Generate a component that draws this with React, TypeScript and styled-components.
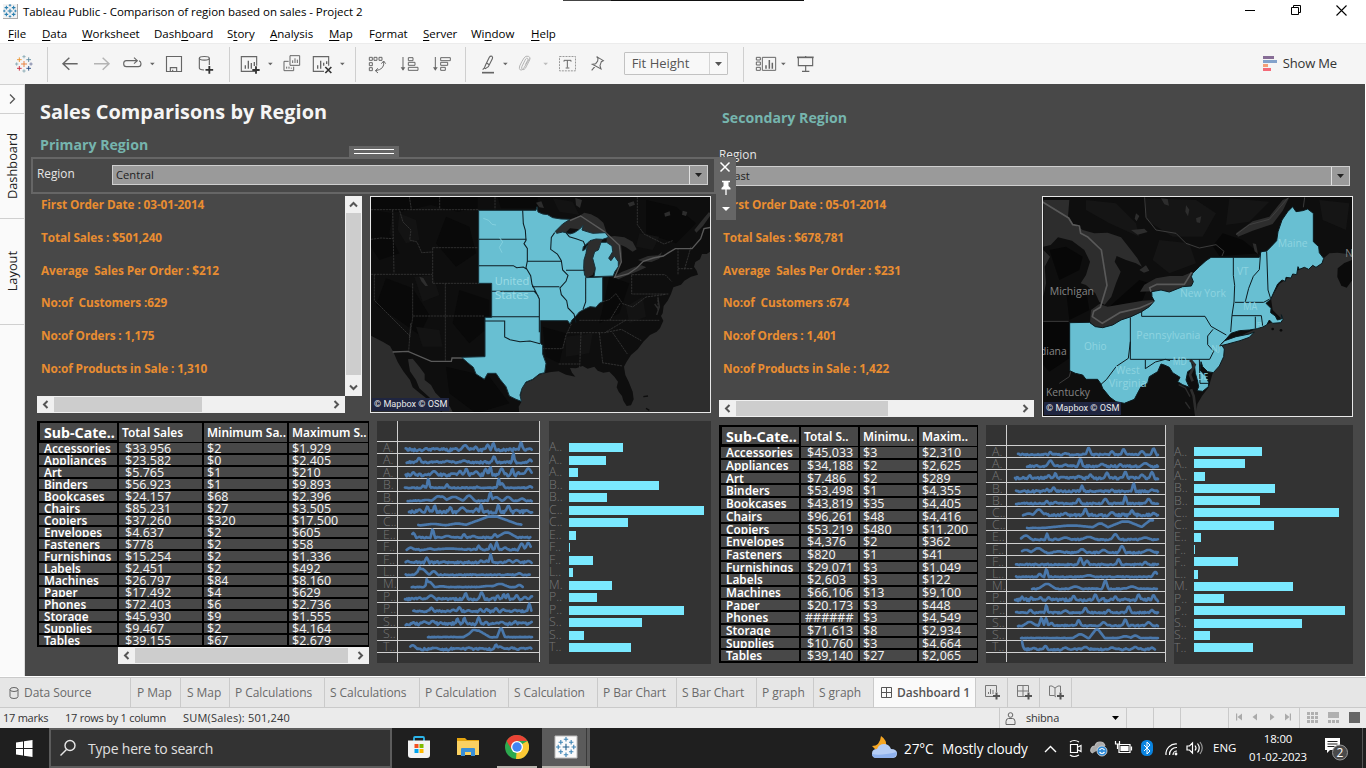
import React from "react";
import styled, { createGlobalStyle } from "styled-components";

const ui = `"Open Sans", "Noto Sans", sans-serif`;
const noto = `"Noto Sans", "Open Sans", sans-serif`;

const Global = createGlobalStyle`
  * { box-sizing: border-box; }
  html, body { margin: 0; padding: 0; overflow: hidden; }
  body { font-family: ${ui}; background: #fff; }
  svg { display: block; flex: none; }
`;

const Screen = styled.div`
  width: 1366px; height: 768px; display: flex; flex-direction: column; background: #fff;
`;

/* ---------- window chrome ---------- */
const TitleBar = styled.header`
  height: 24px; display: flex; align-items: flex-start; padding-left: 3px;
`;
const AppIcon = styled.div`
  width: 15px; height: 15px; margin-top: 4px; border-right: 1px solid #aaa; border-bottom: 1px solid #aaa; background: #f2f2f2;
`;
const WindowTitle = styled.div`
  margin-left: 5px; line-height: 24px; font-size: 11.5px; letter-spacing: -0.05px; color: #000; width: 540px; white-space: nowrap;
`;
const Notch = styled.div`
  width: 241px; height: 1px; background: linear-gradient(90deg, #444 48px, #111 48px);
`;
const WinButtons = styled.div`
  margin-left: auto; display: flex; padding-right: 19px; padding-top: 5px; gap: 34.5px;
`;
const MenuBar = styled.nav`
  height: 19px; display: flex; padding-left: 8px;
`;
const MenuItem = styled.div<{ $w: number }>`
  width: ${(p) => p.$w}px; font-size: 11.5px; line-height: 20px; letter-spacing: -0.02px; color: #000; white-space: nowrap;
  u { text-underline-offset: 2px; }
`;

/* ---------- toolbar ---------- */
const Toolbar = styled.div`
  height: 41px; display: flex; background: #f5f5f5; border-top: 1px solid #ececec;
`;
const Sep = styled.div`
  width: 1px; height: 35px; margin-top: 3px; background: #cfcfcf;
`;
const FitSelect = styled.div`
  margin: 8px 0 0 8px; width: 104px; height: 23px; border: 1px solid #c2c2c2; border-radius: 1px; display: flex; background: #f8f8f8;
`;
const FitText = styled.div`
  width: 85px; padding-left: 7px; line-height: 20px; font-size: 13px; color: #555; border-right: 1px solid #d4d4d4;
`;
const FitArrow = styled.div`
  flex: 1; display: grid; place-items: center;
`;
const ShowMe = styled.div`
  margin-left: auto; margin-right: 29px; display: flex; align-items: center; gap: 6px; font-size: 13px; letter-spacing: -0.15px; color: #333; white-space: nowrap; height: 38px;
`;

/* ---------- body ---------- */
const Body = styled.main`
  height: 592px; display: flex;
`;
const Side = styled.aside`
  width: 25px; background: #fafafa; border-right: 1px solid #dcdcdc; border-top: 1px solid #d0d0d0; display: flex; flex-direction: column;
`;
const SideCell = styled.div<{ $h: number }>`
  height: ${(p) => p.$h}px; border-bottom: 1px solid #d0d0d0; display: flex; align-items: center; justify-content: center;
`;
const Vertical = styled.span`
  writing-mode: vertical-rl; transform: rotate(180deg); font-size: 12.8px; color: #222; line-height: 20px;
`;
const Dash = styled.section`
  width: 1340px; background: #484848; display: flex;
`;
const Primary = styled.div`
  width: 692px; padding-left: 12px; display: flex; flex-direction: column;
`;
const Secondary = styled.div`
  flex: 1; padding-left: 2px; display: flex; flex-direction: column;
`;
const Title = styled.h1`
  margin: 14px 0 0 3px; font: 700 19.9px/28px ${ui}; color: #f5f5f5; white-space: nowrap;
`;
const Sub = styled.h2<{ $top: number; $bottom: number }>`
  margin: ${(p) => p.$top}px 0 ${(p) => p.$bottom}px 3px; font: 700 14.15px/22px ${ui}; color: #76b5ae; white-space: nowrap;
`;
const FilterBox = styled.div`
  position: relative; margin-left: -6px; width: 685px; height: 37px; border: 2px solid #666; display: flex; padding: 6px 0 0 4px;
`;
const Handle = styled.div`
  position: absolute; left: 316px; top: -13px; width: 50px; height: 11px; background: #666; padding: 3px 5px 0;
  display: flex; flex-direction: column; gap: 3px;
  i { height: 1px; background: #fff; }
`;
const Floater = styled.div`
  position: absolute; z-index: 2; left: 683px; top: -2px; width: 20px; height: 63px; background: #666;
`;
const FieldLabel = styled.div<{ $w?: number; $lh?: number }>`
  width: ${(p) => (p.$w ? p.$w + "px" : "auto")}; height: 19px; font-size: 11.8px; line-height: ${(p) => p.$lh ?? 19}px; color: #e6e6e6;
`;
const Select = styled.div<{ $w: number }>`
  width: ${(p) => p.$w}px; height: 20px; border: 1px solid #cfcfcf; background: #9a9a9a; display: flex;
`;
const SelectValue = styled.div<{ $pad: number }>`
  flex: 1; padding-left: ${(p) => p.$pad}px; font-size: 11.2px; line-height: 18px; color: #222;
`;
const SelectArrow = styled.div`
  width: 18px; border-left: 1px solid #e0e0e0; display: grid; place-items: center;
`;
const Row = styled.div<{ $top: number }>`
  display: flex; margin-top: ${(p) => p.$top}px; align-items: flex-start;
`;
const Gap = styled.div<{ $w: number }>`
  width: ${(p) => p.$w}px; flex: none;
`;
const KpiPanel = styled.div<{ $w: number; $h: number; $bar: number }>`
  display: grid; grid-template-columns: ${(p) => p.$w}px ${(p) => p.$bar}px; grid-template-rows: ${(p) => p.$h}px 17px;
`;
const KpiList = styled.div`
  padding-left: 4px; overflow: hidden;
`;
const Kpi = styled.div`
  height: 32.8px; font: 700 11.8px/16px ${ui}; letter-spacing: -0.1px; color: #e98d31; white-space: pre;
`;
const HBar = styled.div<{ $w: number }>`
  width: ${(p) => p.$w}px; height: 17px; background: #f0f0f0; display: flex; align-items: center; justify-content: space-between;
`;
const HThumb = styled.div<{ $w: number }>`
  width: ${(p) => p.$w}px; height: 15px; background: #cdcdcd; margin-right: auto;
`;
const VBar = styled.div`
  width: 17px; background: #f0f0f0; display: flex; flex-direction: column; align-items: center; justify-content: space-between;
`;
const VThumb = styled.div`
  width: 15px; height: 162px; background: #cdcdcd; margin-bottom: auto;
`;
const MapFrame = styled.div<{ $w: number; $h: number }>`
  position: relative; width: ${(p) => p.$w}px; height: ${(p) => p.$h}px; border: 1px solid #e8e8e8; overflow: hidden;
  > svg { margin: -1px; }
`;
const Attribution = styled.div`
  position: absolute; left: 1px; bottom: 1px; height: 13px; padding: 0 2px; background: #1f2540; color: #e8e8e8;
  font: 9.1px/13px Roboto, sans-serif; white-space: nowrap;
`;

/* ---------- tables ---------- */
const TableBox = styled.div<{ $w: number }>`
  width: ${(p) => p.$w}px; background: #000;
`;
const THead = styled.div<{ $cols: string; $h: number }>`
  display: grid; grid-template-columns: ${(p) => p.$cols}; column-gap: 2px; padding: 2px 1px 0 2px; height: ${(p) => p.$h}px;
`;
const TH = styled.div<{ $first?: boolean }>`
  background: #484848; overflow: hidden; white-space: nowrap; color: #fff;
  margin: ${(p) => (p.$first ? "0 0 3px 1px" : "0 0 1px")};
  padding-left: ${(p) => (p.$first ? 4 : 3)}px;
  font: ${(p) => (p.$first ? "700 14.2px" : "600 11.9px")}/19px ${noto};
  letter-spacing: 0;
`;
const TRow = styled.div<{ $cols: string; $h: number }>`
  display: grid; grid-template-columns: ${(p) => p.$cols}; column-gap: 2px; padding: 0 1px 2px 2px; height: ${(p) => p.$h}px;
`;
const TD = styled.div<{ $pad: number; $bold?: boolean }>`
  background: #484848; overflow: hidden; white-space: nowrap; padding-left: ${(p) => p.$pad}px; color: ${(p) => (p.$bold ? "#fff" : "#f0f0f0")};
  font: ${(p) => (p.$bold ? "600 11.8px" : "400 12.5px")}/11px ${noto};
`;

/* ---------- charts ---------- */
const Panel = styled.div<{ $w: number; $h: number }>`
  width: ${(p) => p.$w}px; height: ${(p) => p.$h}px; background: #333; display: flex; flex-direction: column; position: relative;
`;
const Rules = styled.div<{ $h: number }>`
  position: absolute; left: 20px; right: 0; top: 0; height: ${(p) => p.$h}px; border-left: 1px solid #cfcfcf; border-right: 1px solid #cfcfcf;
`;
const Lead = styled.div<{ $h: number }>`
  height: ${(p) => p.$h}px; flex: none;
`;
const SparkRow = styled.div<{ $h: number }>`
  height: ${(p) => p.$h}px; flex: none; border-top: 1px solid #cfcfcf; display: flex;
`;
const SparkEnd = styled.div`
  height: 1px; background: #cfcfcf;
`;
const Letter = styled.span<{ $w: number; $pad: number; $h: number }>`
  width: ${(p) => p.$w}px; flex: none; padding-left: ${(p) => p.$pad}px; overflow: visible; white-space: nowrap;
  font: 300 12.3px/${(p) => p.$h}px ${ui}; color: #777;
`;
const BarRow = styled.div<{ $h: number }>`
  height: ${(p) => p.$h}px; flex: none; display: flex; align-items: center;
`;
const Bar = styled.div`
  height: 9px; background: #7ae9ff;
`;

/* ---------- tabs + status ---------- */
const Tabs = styled.div`
  height: 32px; border-top: 1px solid #fff; display: flex; background: #e6e6e6; box-shadow: inset 0 1px 0 #cacaca, inset 0 -1px 0 #cacaca; padding: 1px 0;
`;
const Tab = styled.div<{ $w: number; $pad?: number; $active?: boolean }>`
  width: ${(p) => p.$w}px; padding-left: ${(p) => p.$pad ?? 5}px; border-right: 1px solid #cacaca; display: flex; align-items: center; gap: 5px; white-space: nowrap;
  font: ${(p) => (p.$active ? "600 12px" : "400 12px")}/28px ${ui}; letter-spacing: -0.06px;
  color: ${(p) => (p.$active ? "#555" : "#6a6a6a")}; background: ${(p) => (p.$active ? "#fafafa" : "transparent")};
`;
const Status = styled.div`
  height: 20px; background: #ebebeb; display: flex; font: 11px/20px ${ui}; color: #333; white-space: nowrap; letter-spacing: -0.22px;
`;
const StatusText = styled.div<{ $w: number; $ls?: number }>`
  width: ${(p) => p.$w}px; padding-left: 3px; letter-spacing: ${(p) => p.$ls ?? -0.25}px;
`;
const StatusCell = styled.div<{ $w: number }>`
  width: ${(p) => p.$w}px; border-left: 1px solid #cacaca; display: flex; align-items: center;
`;

/* ---------- taskbar ---------- */
const Taskbar = styled.footer`
  height: 40px; background: #1f1f1f; display: flex; color: #fff;
`;
const Start = styled.div`
  width: 49px; display: flex; align-items: center; padding-left: 16px;
`;
const Search = styled.div`
  width: 343px; border: 2px solid #5c5c5c; background: #333; display: flex; align-items: center; padding-left: 8px; gap: 11px;
  font-size: 14px; color: #e0e0e0; letter-spacing: -0.2px;
`;
const TaskApp = styled.div<{ $w: number; $on?: boolean; $line?: boolean }>`
  width: ${(p) => p.$w}px; display: flex; align-items: center; justify-content: center;
  background: ${(p) => (p.$on ? "linear-gradient(90deg,#5b5b5b 44px,#3a3a3a 44px,#3a3a3a 45px,#5b5b5b 45px)" : "transparent")};
  border-bottom: 2px solid ${(p) => (p.$line ? "#b8b5ae" : "transparent")};
`;
const Weather = styled.div`
  margin-left: auto; width: 173px; display: flex; align-items: center; font-size: 13.6px; white-space: nowrap; letter-spacing: -0.1px;
`;
const TempText = styled.span`
  width: 38px; margin-left: 7px;
`;
const Tray = styled.div`
  width: 169px; display: flex; align-items: center;
`;
const Lang = styled.div`
  width: 34px; line-height: 39px; font-size: 11.5px;
`;
const Clock = styled.div`
  width: 62px; text-align: center; font-size: 11.4px; line-height: 18px; padding-top: 2px; letter-spacing: -0.15px; white-space: nowrap;
`;
const Notice = styled.div`
  width: 54px; padding-left: 15px; border-right: 1px solid #555; margin-right: 3px; display: flex; align-items: center;
`;

/* ---------- icons ---------- */
type IcoProps = { x: number; w: number; children?: React.ReactNode; y?: number; h?: number };
const Tool = ({ x, w, y = 132, h = 120, children }: IcoProps) => (
  <svg width={w / 3} height={h / 3} viewBox={`${x} ${y} ${w} ${h}`} fill="none" stroke="#666" strokeWidth="3.4">
    {children}
  </svg>
);
const caret = (x: number, y: number, c = "#666") => <path d={`M${x - 7} ${y - 4}h14l-7 8z`} fill={c} stroke="none" />;
const plus = (x: number, y: number, r: number, c: string, w = 3) => (
  <path key={`${x},${y}`} d={`M${x - r} ${y}h${2 * r}M${x} ${y - r}v${2 * r}`} stroke={c} strokeWidth={w} fill="none" />
);
const Cluster = ({ size, mono, w = 3 }: { size: number; mono?: string; w?: number }) => (
  <svg width={size} height={size} viewBox="44 164 54 54">
    {plus(71, 191, 9, mono ?? "#e8762d", w)}
    {plus(57, 178, 7, mono ?? "#eb9129", w)}
    {plus(85, 178, 7, mono ?? "#59879b", w)}
    {plus(57, 204, 7, mono ?? "#c72035", w)}
    {plus(85, 204, 7, mono ?? "#1f457e", w)}
    {plus(71, 169, 5, mono ?? "#7199a6", w * 0.8)}
    {plus(71, 212, 5, mono ?? "#7199a6", w * 0.8)}
    {plus(49, 191, 5, mono ?? "#7099a6", w * 0.8)}
    {plus(92, 191, 5, mono ?? "#5b6591", w * 0.8)}
  </svg>
);
const LogoCell = styled.div`
  width: 47px; display: flex; align-items: center; padding-left: 15px; height: 39px;
`;

const ArrowDown = ({ c = "#222" }: { c?: string }) => (
  <svg width="7" height="4" viewBox="0 0 7 4"><path d="M0 0h7L3.5 4z" fill={c} /></svg>
);
const Chev = ({ dir }: { dir: "l" | "r" | "u" | "d" }) => {
  const rot = { l: 0, u: 90, r: 180, d: 270 }[dir];
  return (
    <svg width="17" height="17" viewBox="0 0 17 17">
      <path d="M10.5 5L7 8.5l3.5 3.5" fill="none" stroke="#555" strokeWidth="2" transform={`rotate(${rot} 8.5 8.5)`} />
    </svg>
  );
};

/* ---------- data ---------- */
const names = ["Accessories", "Appliances", "Art", "Binders", "Bookcases", "Chairs", "Copiers", "Envelopes", "Fasteners", "Furnishings", "Labels", "Machines", "Paper", "Phones", "Storage", "Supplies", "Tables"];
const central = ["$33,956|$2|$1,929", "$23,582|$0|$2,405", "$5,765|$1|$210", "$56,923|$1|$9,893", "$24,157|$68|$2,396", "$85,231|$27|$3,505", "$37,260|$320|$17,500", "$4,637|$2|$605", "$778|$2|$58", "$15,254|$2|$1,336", "$2,451|$2|$492", "$26,797|$84|$8,160", "$17,492|$4|$629", "$72,403|$6|$2,736", "$45,930|$9|$1,555", "$9,467|$2|$4,164", "$39,155|$67|$2,679"];
const east = ["$45,033|$3|$2,310", "$34,188|$2|$2,625", "$7,486|$2|$289", "$53,498|$1|$4,355", "$43,819|$35|$4,405", "$96,261|$48|$4,416", "$53,219|$480|$11,200", "$4,376|$2|$362", "$820|$1|$41", "$29,071|$3|$1,049", "$2,603|$3|$122", "$66,106|$13|$9,100", "$20,173|$3|$448", "######|$3|$4,549", "$71,613|$8|$2,934", "$10,760|$3|$4,664", "$39,140|$27|$2,065"];
const barsL = [54, 37, 9, 90, 38, 135, 59, 7, 1, 24, 4, 43, 28, 115, 73, 15, 62];
const barsR = [68, 51, 11, 81, 66, 145, 80, 7, 1, 44, 4, 99, 30, 151, 108, 16, 59];

/* each line: [start, end, noise, [peakX, height, halfWidth]...] */
type Line = [number, number, number, ...[number, number, number][]];
const linesL: Line[] = [
  [107, 485, 6, [168, 9, 10], [200, 8, 14], [255, 8, 12], [285, 18, 14], [317, 14, 8], [353, 20, 8], [370, 24, 7], [453, 26, 7], [480, 8, 8]],
  [110, 486, 4, [147, 16, 8], [232, 7, 14], [282, 8, 14], [372, 20, 8], [430, 29, 5], [480, 11, 8]],
  [107, 486, 6, [130, 12, 8], [192, 15, 14], [270, 16, 8], [289, 22, 8], [318, 14, 12], [347, 22, 8], [361, 27, 6], [395, 23, 10], [427, 22, 6], [445, 12, 7], [475, 23, 14]],
  [105, 486, 2, [160, 8, 6], [175, 28, 5], [231, 12, 6], [321, 5, 5], [386, 28, 5], [396, 15, 8], [480, 6, 8]],
  [113, 486, 2, [170, 4, 20], [205, 15, 18], [216, 14, 16], [252, 13, 26], [297, 17, 16], [361, 26, 6], [378, 12, 16], [414, 13, 14], [456, 8, 12]],
  [117, 486, 6, [148, 11, 10], [172, 20, 7], [194, 23, 6], [241, 18, 7], [277, 17, 16], [319, 14, 8], [333, 26, 6], [385, 25, 6], [415, 22, 9], [440, 10, 8], [470, 9, 10]],
  [145, 456, 1, [190, 4, 30], [262, 5, 30], [330, 12, 40], [368, 26, 70], [435, 4, 30]],
  [127, 483, 3, [130, 16, 8], [188, 26, 6], [232, 7, 18], [282, 12, 7], [310, 7, 12], [375, 12, 8], [410, 17, 30]],
  [110, 483, 3, [122, 8, 12], [180, 5, 16], [240, 5, 60], [326, 14, 6], [362, 18, 6], [380, 24, 6], [405, 8, 10], [455, 20, 10], [475, 22, 10]],
  [107, 486, 4, [113, 7, 8], [170, 17, 7], [220, 5, 8], [333, 8, 8], [350, 8, 6], [362, 28, 5], [417, 9, 12], [440, 9, 12], [475, 7, 10]],
  [107, 480, 2, [148, 24, 5], [155, 19, 20], [191, 12, 12], [448, 6, 10]],
  [125, 460, 1, [171, 26, 4], [178, 16, 14], [215, 3, 20], [355, 4, 30], [390, 10, 26], [448, 7, 10]],
  [105, 486, 5, [148, 8, 10], [183, 14, 16], [287, 21, 7], [335, 23, 9], [383, 14, 7], [401, 18, 6], [413, 18, 6], [440, 15, 8], [465, 10, 10], [485, 12, 8]],
  [130, 486, 4, [184, 14, 8], [250, 8, 10], [268, 15, 8], [295, 6, 10], [331, 10, 7], [350, 10, 7], [378, 12, 8], [400, 9, 8], [435, 7, 10], [478, 26, 6]],
  [107, 486, 6, [130, 9, 8], [163, 11, 14], [188, 13, 12], [212, 9, 8], [262, 20, 6], [283, 22, 6], [326, 24, 7], [348, 10, 8], [395, 10, 14], [436, 12, 8], [460, 8, 12], [484, 10, 6]],
  [174, 486, 1, [313, 22, 22], [320, 20, 34], [393, 27, 10]],
  [121, 486, 5, [128, 15, 15], [195, 7, 20], [262, 6, 20], [297, 8, 10], [335, 6, 14], [378, 17, 7], [390, 11, 14], [425, 8, 10], [460, 7, 10], [480, 8, 8]],
];
const linesR: Line[] = [
  [918, 1338, 3, [1015, 10, 6], [1060, 6, 10], [1130, 22, 8], [1200, 12, 8], [1235, 18, 8], [1290, 12, 10], [1325, 20, 8]],
  [945, 1338, 4, [1015, 20, 12], [1060, 8, 12], [1105, 24, 8], [1170, 10, 12], [1225, 9, 8], [1300, 12, 16]],
  [909, 1338, 5, [953, 12, 7], [1010, 12, 8], [1030, 18, 6], [1100, 10, 8], [1135, 14, 8], [1185, 20, 8], [1240, 22, 8], [1290, 14, 10], [1320, 22, 8]],
  [912, 1338, 4, [1005, 10, 6], [1025, 14, 8], [1110, 20, 6], [1200, 8, 8], [1265, 26, 6], [1320, 8, 10]],
  [912, 1338, 3, [1004, 10, 6], [1030, 7, 8], [1100, 16, 8], [1180, 16, 10], [1240, 24, 6], [1310, 16, 10]],
  [933, 1338, 5, [950, 8, 20], [980, 20, 18], [1000, 8, 10], [1060, 10, 10], [1120, 22, 8], [1200, 12, 12], [1260, 18, 8], [1325, 10, 8]],
  [945, 1325, 1, [1080, 8, 80], [1165, 14, 24], [1240, 20, 50], [1320, 24, 30]],
  [927, 1338, 3, [941, 14, 18], [1005, 20, 5], [1060, 8, 20], [1130, 10, 24], [1210, 18, 12], [1300, 8, 20]],
  [930, 1338, 3, [941, 10, 20], [978, 15, 22], [1040, 6, 20], [1110, 12, 14], [1175, 10, 14], [1230, 22, 10], [1310, 10, 20]],
  [912, 1338, 3, [1105, 22, 8], [1125, 14, 8], [1220, 18, 8], [1300, 10, 8]],
  [912, 1335, 2, [983, 10, 8], [1003, 24, 6], [1130, 6, 20], [1330, 16, 10]],
  [960, 1335, 2, [1005, 16, 24], [1090, 8, 20], [1180, 26, 8], [1260, 8, 20]],
  [909, 1338, 6, [930, 14, 6], [958, 12, 6], [985, 12, 8], [1010, 12, 8], [1085, 16, 8], [1150, 20, 8], [1210, 14, 8], [1280, 20, 8], [1325, 18, 8]],
  [912, 1338, 3, [955, 10, 8], [1003, 24, 5], [1060, 8, 12], [1120, 16, 8], [1190, 10, 8], [1250, 20, 8], [1320, 10, 8]],
  [918, 1338, 3, [953, 13, 20], [988, 24, 7], [1002, 24, 6], [1018, 10, 8], [1100, 18, 8], [1175, 12, 12], [1240, 20, 8], [1310, 12, 12]],
  [927, 1338, 1, [1105, 12, 20], [1155, 26, 20], [1240, 6, 20], [1270, 8, 14]],
  [930, 1330, 4, [930, 26, 4], [965, 7, 10], [1000, 13, 8], [1060, 8, 12], [1120, 10, 14], [1200, 8, 14], [1270, 10, 12], [1320, 8, 10]],
];
const trace = ([from, to, noise, ...peaks]: Line, seed: number) => {
  let s = seed * 7919 + 13;
  const rnd = () => ((s = (s * 1103515245 + 12345) % 2147483648) / 2147483648);
  let d = "";
  for (let x = from; x <= to; x += 3) {
    let y = 0;
    for (const [px, h, hw] of peaks) y = Math.max(y, h * Math.min(1, Math.max(0, 1.2 - Math.abs(x - px) / hw)));
    y = Math.max(y, rnd() * noise * 1.5);
    d += `${d ? "L" : "M"}${x} ${(-y).toFixed(1)}`;
  }
  return d;
};

const Sparks = ({ lines, w, h, lead, pitch, x0, base }: { lines: Line[]; w: number; h: number; lead: number; pitch: number; x0: number; base: number }) => (
  <Panel $w={w} $h={h}>
    <Rules $h={h - 1} />
    <Lead $h={lead} />
    {lines.map((l, i) => (
      <SparkRow key={i} $h={pitch}>
        <Letter $w={20} $pad={6} $h={pitch}>{names[i][0]}{"EFLPSCT".includes(names[i][0]) ? ".." : "."}</Letter>
        <svg width={w - 21} height={pitch - 1} viewBox={`${x0} ${-base} ${(w - 21) * 3} ${(pitch - 1) * 3}`} overflow="visible">
          <path d={trace(l, i + 1)} fill="none" stroke="#4a78ab" strokeWidth="8" strokeLinejoin="round" strokeLinecap="round" />
        </svg>
      </SparkRow>
    ))}
    <SparkEnd />
  </Panel>
);
const Bars = ({ data, w, h, lead, pitch }: { data: number[]; w: number; h: number; lead: number; pitch: number }) => (
  <Panel $w={w} $h={h}>
    <Lead $h={lead} />
    {data.map((v, i) => (
      <BarRow key={i} $h={pitch}>
        <Letter $w={20} $pad={0} $h={pitch}>{names[i][0]}{names[i][0] === "M" ? "." : ".."}</Letter>
        <Bar style={{ width: v }} />
      </BarRow>
    ))}
  </Panel>
);
const DataTable = ({ w, cols, head, headH, rowH, rows, children }: { w: number; cols: string; head: string[]; headH: number; rowH: number; rows: string[]; children?: React.ReactNode }) => (
  <div>
    <TableBox $w={w}>
      <THead $cols={cols} $h={headH}>
        {head.map((t, i) => <TH key={t} $first={i === 0}>{t}</TH>)}
      </THead>
      {rows.map((r, i) => (
        <TRow key={i} $cols={cols} $h={rowH}>
          <TD $bold $pad={5}>{names[i]}</TD>
          {r.split("|").map((v, j) => <TD key={j} $pad={j === 0 ? (v[0] === "#" ? 4 : 6) : 3}>{v}</TD>)}
        </TRow>
      ))}
    </TableBox>
    {children}
  </div>
);

/* ---------- maps ---------- */
const land = "#0e0e0e", sea = "#2d2d2d", fillc = "#68bfd2";
const superior = "566,245 585,225 612,208 640,198 655,188 675,193 695,203 712,218 722,248 700,249 680,250 660,244 648,240 652,226 640,238 612,235 600,247 572,250";
const michigan = "654,355 654,330 662,305 655,298 665,285 668,275 690,267 710,268 705,277 697,300 686,305 680,325 688,355 680,375 662,383 655,372";
const huron = "722,262 745,258 775,262 800,275 812,298 800,305 780,292 765,285 768,310 765,340 758,348 757,335 745,318 735,332 728,325 740,305 738,288 722,277";
const CentralMap = () => (
  <svg width="341" height="217" viewBox="12 138 1023 651">
    <rect x="12" y="138" width="1023" height="651" fill={land} />
    <g fill="#090909">
      <path d="M15 140h320v35l-60 10-80-20-90 20-90-5zM395 140h120v35h-110zM20 180l60 10-10 60 30 60-60 20-25-40zM60 385l80 30 50 80-30 60-70-50-60-40zM240 200l70 30 20 80-60 40-60-70zM280 420l90 30v80l-60 50-50-60zM530 530l70 20-20 90-40-20zM730 380l60 20-30 90-60 30zM840 150l90 20 60 50-60 60-90-30zM240 650l130 30 60 80-100 30-80-60z" />
    </g>
    <g fill="#131313">
      <path d="M100 190l50 20 10 60-40 10-25-40zM145 380l55-5 20 60-50 20zM560 145l60 10 20 40-60-10zM820 250l60 10-20 40-50-10zM150 530l70 10 10 50-60 0zM600 560l80-10-10 60-70 10zM780 470l50-30 10 60-50 20z" />
    </g>
    <g fill={sea}>
      <polygon points="1036,303 1022,312 1008,312 1002,328 988,336 984,350 992,362 996,374 975,380 955,392 945,404 922,412 915,432 905,452 893,468 890,490 885,498 892,512 882,535 872,545 852,555 832,575 815,598 795,615 782,635 774,650 778,675 788,695 800,725 803,748 795,766 782,768 772,752 768,738 758,725 752,712 756,695 745,680 730,665 712,668 695,662 685,650 665,656 650,648 630,655 612,654 618,668 628,680 600,674 578,664 555,666 536,670 520,674 500,690 480,698 468,715 464,740 466,756 458,770 460,790 1036,790" />
      <polygon points="12,556 28,564 50,575 72,588 82,606 95,636 112,664 132,690 140,712 160,728 185,748 210,768 228,790 12,790" />
      <polygon points="126,628 140,626 160,650 176,672 176,690 195,705 208,728 230,750 252,770 262,790 232,790 210,762 186,738 160,715 150,690 132,664" />
      <polygon points={superior} />
      <polygon points={michigan} />
      <polygon points={huron} />
      <path d="M743 380l24-14 40-16 20-4 14 6-26 12-36 14-22 10zM816 330l30-12 30-2 12-10-8 20-24 10-30-2zM160 380l12 4 14 24-8 0-12-14zM785 160l18-6 4 10-16 6zM895 190l16-6 2 12-16 4zM950 182l14 4-4 12-12-4zM510 158l16-4 8 20-14-2zM628 144l20 6-6 24-12-8zM985 240l24-30 20-24 6 8-24 34-20 20z" />
    </g>
    <path d="M832 740l14-2M840 775l10 6" stroke={land} strokeWidth="4" fill="none" />
    <path d="M876 445l4 26-8 24M866 462l10 14" stroke={sea} strokeWidth="4" fill="none" />
    <g fill="none" stroke="#393939" strokeWidth="2.4">
      <path d="M15 179h322M80 180l4 190M15 268l30-4 36 2M130 140l6 38M221 140v38M387 140v38M101 182l10 34 24 24-4 30 22 6 14 32 32-2M200 293h137M200 293v107M200 400h140M15 373h184M25 373v78l108 108M140 400v104l-10 60M140 498h216M238 400v234" strokeDasharray="7 2" />
      <path d="M134 520l-6 84M814 140l0 84 20 28 60 30 26-10M936 294l0 80M975 290l-20 70M936 356h44M797 374h100l20 20M797 374v58h110M710 455l20-6 20-18 20 30 30 10 40-30 60-8M876 440v40M640 511h240M606 548h110l50-10 60 34M645 548l-4 104M700 548l10 90M740 548l44 64M578 642h60M708 638l62 10M527 596h60M590 596l10-40 16-34M762 460l-30 50M720 546l60-36" strokeDasharray="7 2" />
    </g>
    <g fill="none" stroke="#5a5a5a" strokeWidth="4">
      <path d="M80 606l46-2 70 30h60l2-10h36" />
      <path d="M612 212l32-14 70 46 20 18 26 24 6 50-20 46 40-10 26-18 20-20 30-10 30-6 16-10 20-12h50l26-30 10-30 30-6" />
    </g>
    <g fill={fillc} stroke="#17313a" strokeWidth="3" strokeLinejoin="round">
      <polygon points="338,181 510,181 513,170 516,186 530,192 545,194 560,203 585,207 612,208 590,222 568,244 572,250 590,246 600,248 612,252 625,248 640,238 652,226 648,240 660,244 680,250 700,249 718,248 728,262 710,268 690,267 672,272 662,282 652,290 650,302 658,298 664,286 660,310 654,330 653,355 656,375 662,383 710,381 710,455 700,460 690,472 672,470 655,478 640,486 628,500 618,510 612,522 605,512 523,512 523,580 530,586 530,612 540,640 536,668 520,672 500,688 480,696 468,715 462,735 466,754 450,748 430,738 420,710 402,688 390,670 365,670 355,688 330,672 322,652 305,638 287,622 357,620 357,502 377,502 377,400 338,400" />
      <polygon points="684,380 742,378 746,366 757,350 757,335 745,318 735,332 728,325 740,305 738,288 722,277 705,277 697,300 686,305 680,325 688,355" />
    </g>
    <path d="M600 248l10 12 20 6 22 8 6 14M566 248l-10 14-2 36 20 14 12 20 4 28 16 16-6 18-18 20 4 20 16 18 4 22 18 18 6 26M470 181l2 40 6 20 2 30-6 10 10 14 0 38-4 20 14 24 4 26 12 24 10 20v100M338 268h144M338 347h104l10 6 20-2 12 8M484 334h102M600 361h56M498 410h82M377 424h128l12 14M377 500h143M357 513h59v48l16 8 30 6 30-2 30 8M520 460v52M659 382v74l-8 22" fill="none" stroke="#0e1d23" strokeWidth="3.2" />
    <path d="M352 205l16 6 10 12 12 2M400 262l10 14-10 16 8 16" fill="none" stroke="#83d0de" strokeWidth="3" />
    <g fill="#9bdce6" fontFamily="Open Sans, sans-serif" fontSize="31">
      <text x="386" y="404" textLength="104" lengthAdjust="spacingAndGlyphs">United</text>
      <text x="386" y="446" textLength="102" lengthAdjust="spacingAndGlyphs">States</text>
    </g>
  </svg>
);
const EastMap = () => (
  <svg width="311" height="221" viewBox="18 138 933 663">
    <rect x="18" y="138" width="933" height="663" fill={land} />
    <g fill="#151515">
      <path d="M330 145l150 5 60 40-40 70-90 0-80-50zM150 150l90 10 60 60 10 40-90-40-70-40zM580 145l120 10-60 60-70 10zM370 270l90 10 20 60-80 30-50-40zM850 150l90 10-10 80-70-30z" />
    </g>
    <g fill="#070707">
      <path d="M560 250l60 20 50 40-120 8-20-30zM220 470l90-80 30 10-20 50-60 20zM22 515h78v110l-60 40-18-20zM90 420l60 0 10 60-60 30zM40 300l50-10 50 30-10 40-60 30z" />
    </g>
    <g fill={sea}>
      <polygon points="863,325 880,310 905,308 935,312 952,320 952,802 480,802 484,762 498,738 518,712 530,670 560,620 560,582 640,545 700,520 735,505 710,480 705,445 730,402 800,352" />
      <polygon points="22,150 100,150 96,200 112,222 140,240 175,250 215,248 255,262 285,300 304,325 318,350 300,340 270,330 242,318 236,335 254,365 240,400 226,440 206,464 190,456 178,430 150,405 134,400 150,375 162,335 145,300 108,272 66,262 44,285 22,290" />
      <polygon points="22,300 42,320 26,350 30,400 22,440" />
      <polygon points="165,480 190,462 215,470 262,462 320,452 352,450 340,470 315,486 285,500 255,510 230,525 200,533 178,530 162,515" />
      <polygon points="312,425 325,404 360,385 400,378 440,378 470,365 476,385 472,398 466,410 440,412 400,427 350,424" />
      <path d="M600 250l50-36 50-14 40-50 20-8-20 40-30 40-60 20-44 18zM375 145l20 2 4 20-14-4zM450 165l10 14-4 20-8-14zM480 205l16-6-4 20-10-2zM285 240l40-4 10 10-30 8zM310 360l20-14 10 16-16 6zM650 280l10 2 6 30-10-8zM300 190l10 8-8 16-6-8z" />
    </g>
    <path d="M905 355l20-16 25-10v60l-18 24-16-6-12-26z" fill="#0b0b0b" />
    <g fill="none" stroke="#434343" strokeWidth="4">
      <path d="M326 142l4 60 30 38 60 10 30 30 40 14 50-10 24 20-6 14M600 254l40-30 60-16 56-64M806 142l-4 30M22 514h76M70 700l30-20 4-16" strokeWidth="2.6" />
    </g>
    <g fill="none" stroke="#595959" strokeWidth="5" strokeLinejoin="round">
      <path d="M20 156l78 48 12 20 20 4 4 22 20 10 42 40 17 106-20 66-20 12-4 16 30 20 52-32 60-14 50-22M345 425l-4-12 22-10h82l22-36" />
    </g>
    <g fill={fillc} stroke="#0b1a1f" strokeWidth="3" strokeLinejoin="round">
      <polygon points="101,518 160,517 178,530 200,533 230,525 255,510 285,500 317,485 340,470 355,453 348,440 347,425 375,420 400,426 440,410 466,408 472,395 466,380 470,370 490,350 510,332 525,322 670,322 675,305 692,303 705,290 722,272 726,245 738,210 755,185 770,170 780,185 800,182 815,177 832,190 832,275 848,290 850,308 863,325 858,340 840,352 830,346 818,358 805,352 790,358 786,350 782,374 770,372 765,384 750,382 748,394 738,390 725,402 712,430 704,448 690,460 705,475 704,488 718,498 724,510 738,506 736,494 741,508 734,518 710,520 700,510 692,525 680,531 664,536 640,540 610,542 585,550 572,565 555,582 565,597 563,620 550,648 532,668 515,665 500,650 495,635 492,660 510,680 518,697 517,710 500,724 483,722 488,710 484,690 478,670 475,640 465,628 470,655 455,665 450,690 460,712 440,704 425,695 432,682 410,668 400,652 385,645 375,642 365,665 340,680 335,700 315,710 295,748 265,760 240,755 222,742 200,715 195,702 185,688 150,688 140,675 118,670 101,662" />
      <polygon points="550,588 566,572 600,560 640,552 655,546 640,562 612,572 575,582" />
    </g>
    <path d="M283 502v126h238l12-24-18-20 0-26 16-20M317 485v14h190l18 30 46 26M283 575l-6 50-36 24-30 40-16 14M328 630v26l30-20 30-8 14 4M490 628l2 72h24M584 546l4-50 6-40 2-50-4-30 0-54M588 497h88l4 30M658 500v36M597 457h86l18-10M628 455l10-40 14-36 18-20 4-54M692 304l4 116 8 26" fill="none" stroke="#0b1a1f" strokeWidth="3" />
    <path d="M465 718l8 20 8 60M462 630l14 14-14 30 8 20" fill="none" stroke={sea} strokeWidth="8" />
    <path d="M428 704l20 10 14 26M448 756l14 20" fill="none" stroke={sea} strokeWidth="4" />
    <circle cx="710" cy="537" r="4" fill="#0a0a0a" /><circle cx="735" cy="541" r="4" fill="#0a0a0a" />
    <g fill="#8ed4e0" fontFamily="Open Sans, sans-serif" fontSize="30">
      <text x="725" y="291" textLength="90" lengthAdjust="spacingAndGlyphs">Maine</text>
      <text x="603" y="374">VT</text>
      <text x="432" y="441" textLength="138" lengthAdjust="spacingAndGlyphs">New York</text>
      <text x="622" y="479" textLength="42" lengthAdjust="spacingAndGlyphs">MA</text>
      <text x="662" y="530" fontSize="24">R</text>
      <text x="301" y="566" textLength="192" lengthAdjust="spacingAndGlyphs">Pennsylvania</text>
      <text x="144" y="600" textLength="68" lengthAdjust="spacingAndGlyphs">Ohio</text>
      <text x="526" y="606" fontSize="26">NJ</text>
      <text x="410" y="646" textLength="42" lengthAdjust="spacingAndGlyphs">MD</text>
      <text x="484" y="689" fontSize="26">DE</text>
      <text x="239" y="671" textLength="72" lengthAdjust="spacingAndGlyphs">West</text>
      <text x="218" y="710" textLength="114" lengthAdjust="spacingAndGlyphs">Virginia</text>
    </g>
    <g fill="#858585" fontFamily="Open Sans, sans-serif" fontSize="31">
      <text x="41" y="436" textLength="133" lengthAdjust="spacingAndGlyphs">Michigan</text>
      <text x="12" y="614" textLength="80" lengthAdjust="spacingAndGlyphs">diana</text>
      <text x="30" y="737" textLength="132" lengthAdjust="spacingAndGlyphs">Kentucky</text>
      <text x="928" y="321">N</text>
    </g>
  </svg>
);

const menus: [string, number, number][] = [["File", 0, 34], ["Data", 0, 40], ["Worksheet", 0, 72], ["Dashboard", 4, 73], ["Story", 1, 43], ["Analysis", 0, 59], ["Map", 0, 40], ["Format", 1, 54], ["Server", 0, 48], ["Window", 2, 60], ["Help", 0, 40]];
const tabs: [string, number][] = [["P Map", 50], ["S Map", 49], ["P Calculations", 95], ["S Calculations", 95], ["P Calculation", 89], ["S Calculation", 89], ["P Bar Chart", 79], ["S Bar Chart", 80], ["P graph", 57], ["S graph", 60]];

export default function App() {
  return (
    <Screen>
      <Global />
      <TitleBar>
        <AppIcon><Cluster size={14} mono="#2a7fb0" w={4} /></AppIcon>
        <WindowTitle>Tableau Public - Comparison of region based on sales - Project 2</WindowTitle>
        <Notch />
        <WinButtons>
          <svg width="11" height="11" viewBox="0 0 11 11"><path d="M0 5.5h10" stroke="#000" /></svg>
          <svg width="11" height="11" viewBox="0 0 11 11" fill="none" stroke="#000"><path d="M.5 2.5h7v7h-7zM2.5 2.5v-2h7v7h-2" /></svg>
          <svg width="11" height="11" viewBox="0 0 11 11"><path d="M.5.5l10 10m0-10l-10 10" stroke="#000" strokeWidth="1.1" /></svg>
        </WinButtons>
      </TitleBar>
      <MenuBar>
        {menus.map(([t, k, w]) => <MenuItem key={t} $w={w}>{t.slice(0, k)}<u>{t[k]}</u>{t.slice(k + 1)}</MenuItem>)}
      </MenuBar>
      <Toolbar>
        <LogoCell><Cluster size={18} w={2.6} /></LogoCell>
        <Sep />
        <Tool x={144} w={114}><path d="M190 191h43M208 173l-19 18 19 18" strokeWidth="4.4" /></Tool>
        <Tool x={258} w={87}><path d="M282 191h44M308 173l19 18-19 18" stroke="#b4b4b4" strokeWidth="4.4" /></Tool>
        <Tool x={345} w={135}><path d="M388 200h-9q-8 0-8-9 0-9 8-9h30M402 173l10 9-10 9M417 182q6 2 6 9 0 9-8 9h-27" />{caret(457, 192)}</Tool>
        <Tool x={480} w={90}><path d="M499.500 169.500h45v45h-45zM511 214v-11h19v11M518 214v-5" /></Tool>
        <Tool x={570} w={117}><ellipse cx="613" cy="175" rx="15" ry="5.500" /><path d="M598 175v29q0 5 14 6M628 175v20" /><path d="M628 198v23M616.500 209.500h23" stroke="#333" strokeWidth="5.500" /></Tool>
        <Sep />
        <Tool x={690} w={140}><path d="M766 214h-42v-44h46v27" /><path d="M736 206v-10M745 206v-24M754 206v-17M763 198v-12" strokeWidth="4" /><path d="M768 199v22M757 210h22" stroke="#333" strokeWidth="5.500" />{caret(811, 192)}</Tool>
        <Tool x={830} w={85}><path d="M869 167h29v29h-29zM865 184h-14v28h29v-12M877 189v-8M884 189v-14M891 189v-10M859 206v-6M866 206v-6M873 206v-3" strokeWidth="3" /></Tool>
        <Tool x={915} w={150}><path d="M972 214h-32v-44h46v27" /><path d="M953 206v-10M962 206v-24M971 197v-9M980 192v-8" strokeWidth="4" /><path d="M976 201l18 18M994 201l-18 18" stroke="#333" strokeWidth="5" />{caret(1027, 192)}</Tool>
        <Sep />
        <Tool x={1068} w={112}><path d="M1108 172h9v9h-9zM1122 172h9v9h-9zM1137 172h9v9h-9zM1108 188h9v9h-9zM1108 203h9v9h-9zM1151 184q4 24-24 28M1144 191l7-8 6 8M1134 205l-8 7 8 7" strokeWidth="3" /></Tool>
        <Tool x={1180} w={95}><path d="M1210 171v38M1226 173h14v9h-14zM1226 187h20v9h-20zM1226 202h29v9h-29z" strokeWidth="3" /><path d="M1203 202h14l-7 10z" fill="#666" stroke="none" /></Tool>
        <Tool x={1275} w={119}><path d="M1306 171v38M1322 173h29v9h-29zM1322 187h21v9h-21zM1322 202h14v9h-14z" strokeWidth="3" /><path d="M1299 202h14l-7 10z" fill="#666" stroke="none" /></Tool>
        <Sep />
        <Tool x={48} w={132}><path d="M107 194l11-22q3-5 8-3 3 3 1 7l-12 24-9 6-3-2zM111 190l8 5M104 203l-6 6" strokeWidth="3.400" /><path d="M96 218h36" strokeWidth="5" />{caret(166, 192)}</Tool>
        <Tool x={180} w={138}><path d="M216 184l-7 14q-3 8 2 12 6 2 10-5l18-30" strokeWidth="3" stroke="#b6b6b6" /><path d="M216 184l6-10q5-8 14-5 7 4 3 11l-13 25q-4 6-9 3-4-3-1-9l11-22q3-4 6-2 2 2 0 6l-7 13" stroke="#b6b6b6" strokeWidth="3" />{caret(287, 192, "#bdbdbd")}</Tool>
        <Tool x={318} w={75}><path d="M328.500 169.500h48v43h-48z" stroke="#999" strokeWidth="3" strokeDasharray="6 3" /><path d="M342 185v-4h21v4M352 181v22M347 204h11" strokeWidth="3" /></Tool>
        <Tool x={393} w={105}><path d="M440 170l20 12-6 3-4 12 3 10-26-14 10-2 6-8 1-8zM437 197l-12 14" strokeWidth="3.200" /></Tool>
        <FitSelect><FitText>Fit Height</FitText><FitArrow><ArrowDown c="#555" /></FitArrow></FitSelect>
        <Gap $w={15} />
        <Sep />
        <Tool x={882} w={135}><path d="M919 172h12v8h-12zM919 186h12v9h-12zM919 202h12v9h-12zM937 172h40v39h-40z" strokeWidth="3" /><path d="M948 206v-10M958 206v-26M967 206v-18" strokeWidth="4.500" />{caret(1000, 192)}</Tool>
        <Tool x={1017} w={121}><path d="M1041 172h50" strokeWidth="5" /><path d="M1045 173v24h43v-24M1067 168v4M1067 197v17M1056 214h22" /></Tool>
        <ShowMe>
          <svg width="14" height="15" viewBox="0 0 14 15"><path d="M0 0h11v3H0z" fill="#876d96" /><path d="M0 4h14v3H0z" fill="#83a2cb" /><path d="M0 8h5v3H0z" fill="#f49f77" /><path d="M0 12h8v3H0z" fill="#f46a78" /></svg>
          Show Me
        </ShowMe>
      </Toolbar>
      <Body>
        <Side>
          <SideCell $h={29}><svg width="7" height="10" viewBox="0 0 7 10"><path d="M1 .5L5.500 5 1 9.500" fill="none" stroke="#555" strokeWidth="1.300" /></svg></SideCell>
          <SideCell $h={105}><Vertical>Dashboard</Vertical></SideCell>
          <SideCell $h={106}><Vertical>Layout</Vertical></SideCell>
        </Side>
        <Dash>
          <Primary>
            <Title>Sales Comparisons by Region</Title>
            <Sub $top={8} $bottom={1}>Primary Region</Sub>
            <FilterBox>
              <Handle><i /><i /></Handle>
              <FieldLabel $w={75} $lh={17}>Region</FieldLabel>
              <Select $w={596}><SelectValue $pad={3}>Central</SelectValue><SelectArrow><ArrowDown /></SelectArrow></Select>
              <Floater>
                <svg width="20" height="63" viewBox="0 0 20 63" stroke="#fff" fill="none">
                  <path d="M4.500 5.500l9 9m0-9l-9 9" strokeWidth="1.500" />
                  <path d="M6 24.500h8M10 32v6" strokeWidth="1.300" /><path d="M7.500 25h5v4l2 2v1.500h-9V31l2-2z" fill="#fff" stroke="none" />
                  <path d="M6 50h8l-4 4z" fill="#fff" stroke="none" />
                </svg>
              </Floater>
            </FilterBox>
            <Row $top={2}>
              <KpiPanel $w={308} $h={200} $bar={17}>
                <KpiList>
                  {["First Order Date : 03-01-2014", "Total Sales : $501,240", "Average  Sales Per Order : $212", "No:of  Customers :629", "No:of Orders : 1,175", "No:of Products in Sale : 1,310"].map((t) => <Kpi key={t}>{t}</Kpi>)}
                </KpiList>
                <VBar><Chev dir="u" /><VThumb /><Chev dir="d" /></VBar>
                <HBar $w={308}><Chev dir="l" /><HThumb $w={148} /><Chev dir="r" /></HBar>
              </KpiPanel>
              <Gap $w={8} />
              <MapFrame $w={341} $h={217}><CentralMap /><Attribution>© Mapbox © OSM</Attribution></MapFrame>
            </Row>
            <Row $top={8}>
              <DataTable w={332} cols="78px 83px 83px 1fr" head={["Sub-Cate..", "Total Sales", "Minimum Sa..", "Maximum S.."]} headH={22} rowH={12} rows={central}>
                <Row $top={0}><Gap $w={81} /><HBar $w={251}><Chev dir="l" /><HThumb $w={213} /><Chev dir="r" /></HBar></Row>
              </DataTable>
              <Gap $w={8} />
              <Sparks lines={linesL} w={163} h={242} lead={20} pitch={12.41} x0={81} base={28} />
              <Gap $w={9} />
              <Bars data={barsL} w={162} h={243} lead={20.3} pitch={12.5} />
            </Row>
          </Primary>
          <Secondary>
            <Sub $top={23} $bottom={16}>Secondary Region</Sub>
            <Row $top={0}><FieldLabel $lh={19}>Region</FieldLabel></Row>
            <Row $top={2}><Select $w={631}><SelectValue $pad={8}>East</SelectValue><SelectArrow><ArrowDown /></SelectArrow></Select></Row>
            <Row $top={10}>
              <KpiPanel $w={315} $h={204} $bar={0}>
                <KpiList>
                  {["First Order Date : 05-01-2014", "Total Sales : $678,781", "Average  Sales Per Order : $231", "No:of  Customers :674", "No:of Orders : 1,401", "No:of Products in Sale : 1,422"].map((t) => <Kpi key={t}>{t}</Kpi>)}
                </KpiList>
                <span />
                <HBar $w={315}><Chev dir="l" /><HThumb $w={152} /><Chev dir="r" /></HBar>
              </KpiPanel>
              <Gap $w={8} />
              <MapFrame $w={311} $h={221}><EastMap /><Attribution>© Mapbox © OSM</Attribution></MapFrame>
            </Row>
            <Row $top={8}>
              <DataTable w={259} cols="78px 57px 57px 1fr" head={["Sub-Cate..", "Total S..", "Minimu..", "Maxim.."]} headH={22.4} rowH={12.7} rows={east} />
              <Gap $w={8} />
              <Sparks lines={linesR} w={180} h={238} lead={20} pitch={12.2} x0={882} base={28} />
              <Gap $w={8} />
              <Bars data={barsR} w={179} h={239} lead={20.5} pitch={12.25} />
            </Row>
          </Secondary>
        </Dash>
      </Body>
      <Tabs>
        <Tab $w={131} $pad={9}>
          <svg width="10" height="12" viewBox="0 0 10 12" fill="none" stroke="#666"><path d="M1 2.500q0-2 4-2t4 2v7q0 2-4 2t-4-2zM1 2.500q0 2 4 2t4-2" /></svg>
          Data Source
        </Tab>
        {tabs.map(([t, w]) => <Tab key={t} $w={w} $pad={t === "P Map" || t === "S Map" ? 6 : 5}>{t}</Tab>)}
        <Tab $w={102} $pad={7} $active>
          <svg width="11" height="11" viewBox="0 0 11 11" fill="none" stroke="#555"><path d="M.5.5h10v10H.5zM5.500.5v10M.5 5.500h10" /></svg>
          Dashboard 1
        </Tab>
        <Tab $w={32} $pad={9}><svg width="15" height="15" viewBox="0 0 15 15" fill="none" stroke="#777"><path d="M8 11.500H.5V.5h11V7M3.500 9V7M5.500 9V4M8 9V5" /><path d="M11.500 7.500v7M8 11h7" stroke="#555" strokeWidth="2" /></svg></Tab>
        <Tab $w={32} $pad={9}><svg width="15" height="15" viewBox="0 0 15 15" fill="none" stroke="#777"><path d="M8 11.500H.5V.5h11V7M6 .5v11M.5 6h11" /><path d="M11.500 7.500v7M8 11h7" stroke="#555" strokeWidth="2" /></svg></Tab>
        <Tab $w={32} $pad={9}><svg width="15" height="15" viewBox="0 0 15 15" fill="none" stroke="#777"><path d="M7 12l-2-1.500H.5V1H3l3 2 3-2h2.500v6M6 3v8" /><path d="M11.500 7.500v7M8 11h7" stroke="#555" strokeWidth="2" /></svg></Tab>
      </Tabs>
      <Status>
        <StatusText $w={62}>17 marks</StatusText>
        <StatusText $w={118}>17 rows by 1 column</StatusText>
        <StatusText $w={819} $ls={0.2}>SUM(Sales): 501,240</StatusText>
        <StatusCell $w={127}>
          <Gap $w={5} />
          <svg width="11" height="13" viewBox="0 0 11 13" fill="none" stroke="#666"><circle cx="5.500" cy="3" r="2.300" /><path d="M1 12.500v-3q0-3 2.500-3h4q2.500 0 2.500 3v3z" /></svg>
          <Gap $w={10} />shibna<Gap $w={53} /><ArrowDown c="#000" />
        </StatusCell>
        <StatusCell $w={27} /><StatusCell $w={27} /><StatusCell $w={48} />
        <StatusCell $w={71}>
          <svg width="70" height="20" viewBox="1 1 70 20" fill="#aaa"><path d="M8 6.500h1.200v7H8zM14 6.500v7L9.500 10zM29 6.500v7L24.500 10zM42 6.500v7l4.500-3.500zM57 6.500v7l4.500-3.500zM61.800 6.500H63v7h-1.200z" /></svg>
        </StatusCell>
        <StatusCell $w={67}>
          <svg width="66" height="20" viewBox="1 1 66 20" fill="#b0b0b0"><path d="M8 5h3v3H8zM12 5h3v3h-3zM16 5h3v3h-3zM8 9h3v3H8zM12 9h3v3h-3zM16 9h3v3h-3zM8 13h3v3H8zM12 13h3v3h-3zM16 13h3v3h-3zM29 5h11v6H29zM29 13h3v3h-3zM33 13h3v3h-3zM37 13h3v3h-3z" /><path d="M50 5h11v11H50z" fill="#666" /></svg>
        </StatusCell>
      </Status>
      <Taskbar>
        <Start><svg width="17" height="17" viewBox="0 0 17 17" fill="#fff"><path d="M0 2.400L7 1.400V8H0zM8 1.300L16.500 0v8H8zM0 9h7v6.600l-7-1zM8 9h8.500v8L8 15.700z" /></svg></Start>
        <Search>
          <svg width="18" height="18" viewBox="0 0 18 18" fill="none" stroke="#e8e8e8" strokeWidth="1.400"><circle cx="11" cy="6.500" r="5" /><path d="M7.500 10.500L1.500 16.500" /></svg>
          Type here to search
        </Search>
        <TaskApp $w={53}>
          <svg width="24" height="24" viewBox="0 0 24 24"><path d="M7 6V3q0-1 1-1h8q1 0 1 1v3" fill="none" stroke="#2cb5ea" strokeWidth="1.800" /><path d="M1 5.500h22V20q0 3-3 3H4q-3 0-3-3z" fill="#f3f3f3" /><path d="M7.500 9h4v4h-4z" fill="#f25022" /><path d="M12.500 9h4v4h-4z" fill="#7fba00" /><path d="M7.500 14h4v4h-4z" fill="#00a4ef" /><path d="M12.500 14h4v4h-4z" fill="#ffb900" /></svg>
        </TaskApp>
        <TaskApp $w={46}>
          <svg width="22" height="20" viewBox="0 0 22 20"><path d="M0 1h8l2 2h12v15H0z" fill="#e5a50f" /><path d="M0 4h22v14H0z" fill="#fbd161" /><path d="M4 19v-7q0-1 1-1h12q1 0 1 1v7h-4v-4H8v4z" fill="#3a8fd6" /></svg>
        </TaskApp>
        <Gap $w={6} />
        <TaskApp $w={40} $line>
          <svg width="24" height="24" viewBox="0 0 24 24"><circle cx="12" cy="12" r="12" fill="#2da94f" /><path d="M12 12L22.400 6A12 12 0 0 1 11 24z" fill="#fcc934" /><path d="M12 6h10.400A12 12 0 0 0 1.600 6L7 15z" fill="#ea4335" /><circle cx="12" cy="12" r="6" fill="#fff" /><circle cx="12" cy="12" r="4.700" fill="#4285f4" /></svg>
        </TaskApp>
        <Gap $w={5} />
        <TaskApp $w={48} $on $line>
          <svg width="24" height="24" viewBox="0 0 24 24"><path d="M1 1h22v22H1z" fill="#fafafa" stroke="#bbb" /><g transform="translate(2 2) scale(.37) translate(-44 -164)">{plus(71, 191, 9, "#1f5d8a", 3)}{[[57, 178], [85, 178], [57, 204], [85, 204], [71, 170], [71, 212], [50, 191], [92, 191]].map(([a, b]) => plus(a, b, 6, "#3d84b5", 3))}</g></svg>
        </TaskApp>
        <Weather>
          <svg width="26" height="24" viewBox="0 0 26 24"><path d="M10 0q6 4 5 10l-8 4q-4-1-6-4 8 0 9-10z" fill="#f5a623" /><path d="M6 22q-5 0-5-4.500T6 13q2-5 7-5t7 5q6 0 6 4.500T21 22z" fill="#b5cdf5" /><path d="M6 22q-5 0-5-4 8 2 25-2-1 6-6 6z" fill="#8fb2ee" /></svg>
          <TempText>27°C</TempText>Mostly cloudy
        </Weather>
        <Tray>
          <svg width="169" height="40" viewBox="1044 728 169 40" fill="none" stroke="#fff" strokeWidth="1.200">
            <path d="M1045 752l5.500-5.500 5.500 5.500" strokeWidth="1.400" />
            <path d="M1070.500 744.500h7v8h-7zM1078 747l3-1.500v6l-3-1.500M1070 742q4-3 9 0M1070 755q4 3 9 0" />
            <path d="M1093 753q-3-1-2-4t4-3q1-4 5-4t5 4" fill="#aaa" stroke="#bbb" /><circle cx="1102" cy="751" r="5" fill="#2d8ad8" stroke="#ddd" strokeWidth=".8" /><path d="M1099.500 750q2.500-3 5 0M1104.500 752q-2.500 3-5 0" stroke="#fff" />
            <path d="M1119 744.500h11v8h-11zM1131.500 746.500v4" /><path d="M1121 746.500h7v4h-7z" fill="#fff" /><path d="M1115.500 741v3h4v-3M1117.500 744v5" />
            <rect x="1141" y="740" width="12" height="16" rx="5.500" fill="#0a84e0" stroke="none" /><path d="M1144 745l6 6-3 3v-12l3 3-6 6" strokeWidth="1" />
            <path d="M1166 755a10 10 0 0 1 11-11M1169.500 755a7 7 0 0 1 7.500-7.500M1173 755a4 4 0 0 1 4-4" /><circle cx="1176" cy="754" r="1.400" fill="#fff" stroke="none" />
            <path d="M1187 746h2.500l3-3v10l-3-3h-2.500zM1195 745.500q2 2.500 0 5M1197.500 743.500q3.500 4.500 0 9" /><path d="M1200 742q4.500 6 0 12" stroke="#999" />
          </svg>
        </Tray>
        <Lang>ENG</Lang>
        <Clock>18:00<br />01-02-2023</Clock>
        <Notice>
          <svg width="26" height="26" viewBox="0 0 26 26"><path d="M1 3h15v12H6l-3 3v-3H1z" fill="#fff" /><path d="M3.500 6.500h10M3.500 9h10M3.500 11.500h7" stroke="#222" /><circle cx="16" cy="17.500" r="7.500" fill="#4a4a4a" stroke="#999" /><text x="16" y="22" fontSize="12" fontFamily="Open Sans, sans-serif" textAnchor="middle" fill="#fff">2</text></svg>
        </Notice>
      </Taskbar>
    </Screen>
  );
}
